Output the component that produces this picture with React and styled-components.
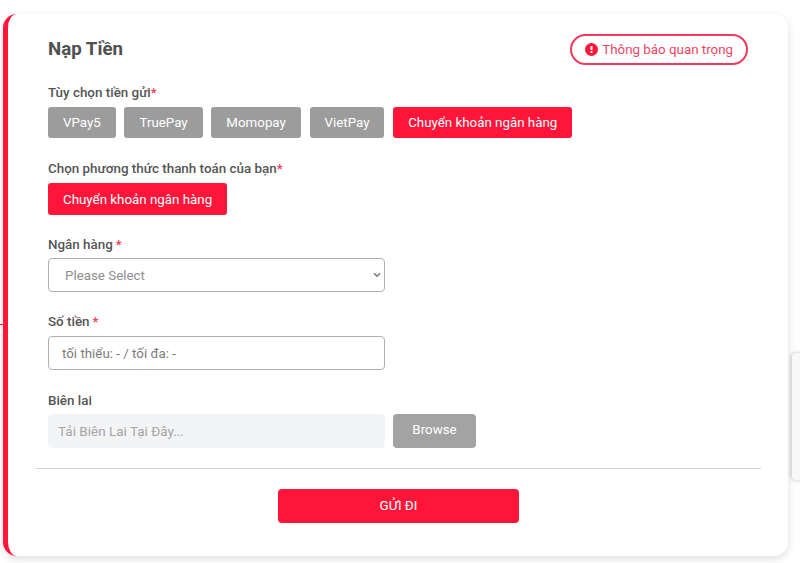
import React from "react";
import styled, { createGlobalStyle } from "styled-components";

const RED = "#ff1539";
const GREY = "#9c9c9c";

const GlobalStyle = createGlobalStyle`
  html, body {
    margin: 0;
    height: 100%;
    overflow: hidden;
    background: #fff;
    font-family: Roboto, "Liberation Sans", sans-serif;
  }
  * {
    box-sizing: border-box;
  }
`;

const Page = styled.div`
  position: relative;
  height: 563px;
  padding: 14px 12px 0 3px;
  overflow: hidden;
`;

const Card = styled.form`
  height: 542px;
  padding: 18px 27px 0 40px;
  background: #fff;
  border-left: 5px solid ${RED};
  border-radius: 14px;
  box-shadow: 0 3px 8px rgba(0, 0, 0, 0.13);
`;

const Header = styled.header`
  display: flex;
  align-items: flex-start;
  justify-content: space-between;
  height: 52px;
  padding: 2px 13px 0 0;
`;

const Title = styled.h1`
  margin: 3px 0 0;
  color: #505050;
  font-size: 18.7px;
  font-weight: 700;
  line-height: 24px;
`;

const Notice = styled.button`
  display: flex;
  align-items: center;
  gap: 4px;
  height: 31px;
  padding: 0 13px;
  color: #ee4565;
  font: 400 13.33px Roboto, sans-serif;
  background: #fff;
  border: 2px solid #f2395c;
  border-radius: 16px;
`;

const Field = styled.div`
  margin-bottom: ${(p) => p.$gap}px;
`;

const Label = styled.label`
  display: block;
  height: ${(p) => p.$height || 23}px;
  color: #555;
  font-size: 13.4px;
  font-weight: 500;
  line-height: 17px;
`;

const Star = styled.span`
  color: #f5385a;
  margin-left: ${(p) => (p.$spaced ? 3 : 0)}px;
`;

const Options = styled.div`
  display: flex;
  gap: 8.7px;
`;

const Option = styled.button`
  height: ${(p) => p.$height || 31}px;
  padding: 0 15px;
  color: #fff;
  font: 400 13.33px Roboto, sans-serif;
  background: ${(p) => (p.$active ? RED : GREY)};
  border: 0;
  border-radius: 3px;
`;

const SelectWrap = styled.div`
  position: relative;
  width: 337px;
`;

const Select = styled.select`
  display: block;
  width: 100%;
  height: 34px;
  padding: 0 4px 0 16px;
  color: #8e8e8e;
  font: 400 13.33px Roboto, sans-serif;
  background: #fff;
  border: 1px solid #b0b0b0;
  border-radius: 4px;
  appearance: none;
`;

const Chevron = styled.svg`
  position: absolute;
  top: 14px;
  right: 4px;
  pointer-events: none;
`;

const Input = styled.input`
  display: block;
  width: 337px;
  height: 34px;
  padding: 0 13px;
  font: 400 13.33px Roboto, sans-serif;
  background: #fff;
  border: 1px solid #b0b0b0;
  border-radius: 4px;

  &::placeholder {
    color: #7c7c7c;
    opacity: 1;
  }
`;

const UploadRow = styled.div`
  display: flex;
  gap: 8px;
`;

const Upload = styled.div`
  width: 337px;
  height: 34px;
  padding: 0 10px;
  color: #a5a5a5;
  font-size: 13.5px;
  line-height: 34px;
  background: #f3f4f6;
  border-radius: 4px;
`;

const Browse = styled.button`
  width: 83px;
  height: 34px;
  padding: 0 0 3px;
  color: #fff;
  font: 400 13.33px Roboto, sans-serif;
  background: #a3a3a3;
  border: 0;
  border-radius: 4px;
`;

const Divider = styled.hr`
  height: 1px;
  margin: 20px 0 20px -12px;
  background: #d2d2d2;
  border: 0;
`;

const Submit = styled.button`
  display: block;
  width: 241px;
  height: 34px;
  margin-left: 230px;
  padding: 0 0 2px;
  color: #fff;
  font: 400 13.33px Roboto, sans-serif;
  background: ${RED};
  border: 0;
  border-radius: 4px;
`;

const EdgeTick = styled.div`
  position: absolute;
  top: 324px;
  left: 0;
  width: 3px;
  height: 1px;
  background: ${RED};
`;

const SidePanel = styled.div`
  position: absolute;
  top: 353px;
  right: -6px;
  width: 14px;
  height: 127px;
  background: #f8f8f8;
  border-radius: 4px 0 0 4px;
  box-shadow: -1px 0 4px rgba(0, 0, 0, 0.22);
`;

const NoticeIcon = () => (
  <svg width="13" height="13" viewBox="0 0 13 13" aria-hidden="true">
    <circle cx="6.5" cy="6.5" r="6.5" fill={RED} />
    <rect x="5.5" y="3" width="2" height="4" rx="0.6" fill="#fff" />
    <rect x="5.5" y="8" width="2" height="2" rx="0.6" fill="#fff" />
  </svg>
);

const depositOptions = ["VPay5", "TruePay", "Momopay", "VietPay"];

const App = () => (
  <Page>
    <GlobalStyle />
    <EdgeTick />
    <SidePanel />
    <Card onSubmit={(e) => e.preventDefault()}>
      <Header>
        <Title>Nạp Tiền</Title>
        <Notice type="button">
          <NoticeIcon />
          Thông báo quan trọng
        </Notice>
      </Header>

      <Field $gap={22}>
        <Label>
          Tùy chọn tiền gửi<Star>*</Star>
        </Label>
        <Options>
          {depositOptions.map((name) => (
            <Option type="button" key={name}>
              {name}
            </Option>
          ))}
          <Option type="button" $active>
            Chuyển khoản ngân hàng
          </Option>
        </Options>
      </Field>

      <Field $gap={21}>
        <Label>
          Chọn phương thức thanh toán của bạn<Star>*</Star>
        </Label>
        <Options>
          <Option type="button" $active $height={32}>
            Chuyển khoản ngân hàng
          </Option>
        </Options>
      </Field>

      <Field $gap={21}>
        <Label $height={22}>
          Ngân hàng<Star $spaced>*</Star>
        </Label>
        <SelectWrap>
          <Select defaultValue="">
            <option value="">Please Select</option>
          </Select>
          <Chevron width="8" height="6" viewBox="0 0 8 6" aria-hidden="true">
            <path d="M1 1.2 4 4.2 7 1.2" fill="none" stroke="#777" strokeWidth="1.5" />
          </Chevron>
        </SelectWrap>
      </Field>

      <Field $gap={22}>
        <Label>
          Số tiền<Star $spaced>*</Star>
        </Label>
        <Input placeholder="tối thiểu: - / tối đa: -" />
      </Field>

      <Field $gap={0}>
        <Label $height={22}>Biên lai</Label>
        <UploadRow>
          <Upload>Tải Biên Lai Tại Đây...</Upload>
          <Browse type="button">Browse</Browse>
        </UploadRow>
      </Field>

      <Divider />
      <Submit type="submit">GỬI ĐI</Submit>
    </Card>
  </Page>
);

export default App;
